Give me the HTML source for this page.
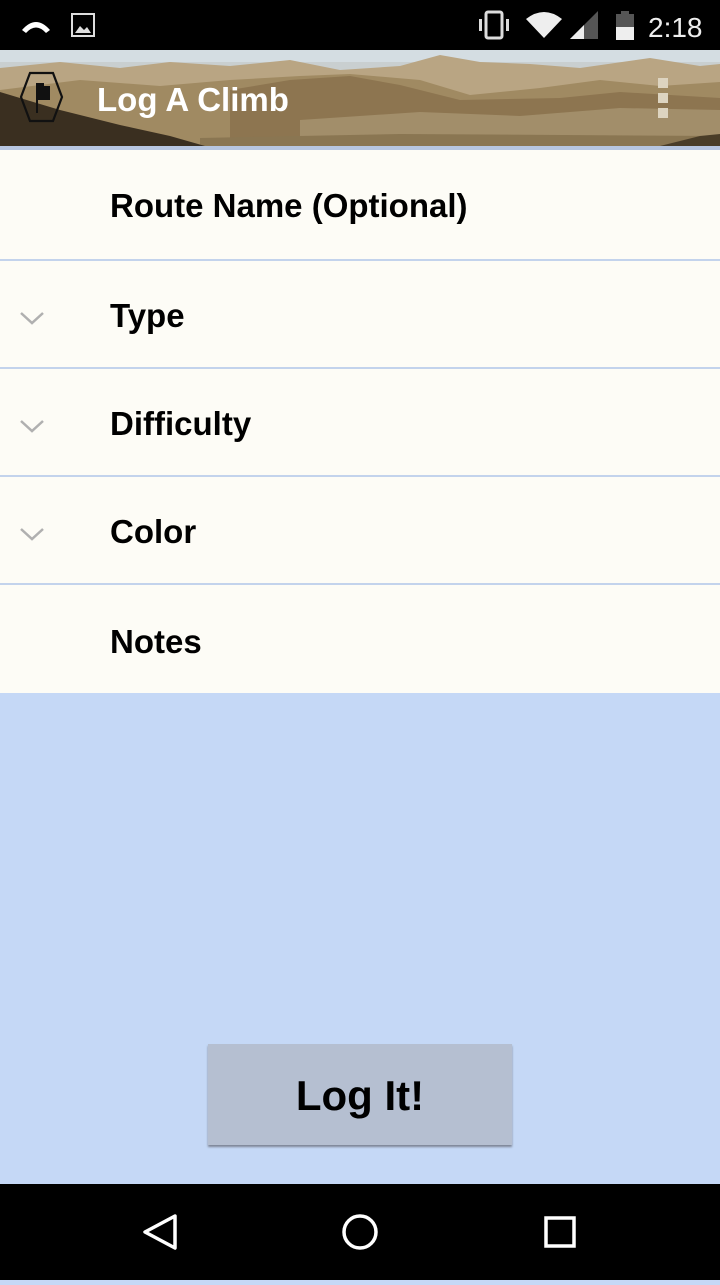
<!DOCTYPE html>
<html><head><style>
body{margin:0;width:720px;height:1280px;background:#c5d8f6;position:relative;overflow:hidden;font-family:"Liberation Sans",sans-serif}
.sb{position:absolute;top:0;left:0;width:720px;height:50px;background:#000}
.hdr{position:absolute;top:50px;left:0;width:720px;height:96px;background:#c9cfd0;overflow:hidden}
.line{position:absolute;top:146px;left:0;width:720px;height:4px;background:#b7c6e0}
.row{position:absolute;left:0;width:720px;background:#fdfcf6;border-bottom:2px solid #c3d3ec}
.row span{position:absolute;left:110px;font-weight:bold;font-size:33px;color:#000}
.chev{position:absolute;left:20px;width:24px;height:14px}
.btn{position:absolute;left:208px;top:1044px;width:304px;height:101px;background:#b5bfd1;box-shadow:0 2px 2px #7d8596;font-weight:bold;font-size:42px;text-align:center;line-height:104px}
.nav{position:absolute;top:1184px;left:0;width:720px;height:96px;background:#000}
</style></head><body>
<div class="sb">
<svg width="720" height="50">
<path d="M22 30 Q36 14 50 30 L46 33 Q36 22 26 33Z" fill="#fff"/>
<rect x="72" y="14" width="22" height="22" fill="none" stroke="#ddd" stroke-width="2"/>
<path d="M75 33 L80 26 L84 30 L87 27 L91 33Z" fill="#ddd"/>
<rect x="486" y="12" width="16" height="26" rx="2" fill="none" stroke="#ddd" stroke-width="3"/>
<rect x="479" y="19" width="3" height="12" fill="#ddd"/><rect x="506" y="19" width="3" height="12" fill="#ddd"/>
<path d="M526 19 Q544 5 562 19 L544 38Z" fill="#eee"/>
<path d="M570 39 L598 11 L598 39Z" fill="#555"/><path d="M570 39 L584 25 L584 39Z" fill="#eee"/>
<rect x="616" y="14" width="18" height="26" fill="#555"/><rect x="616" y="27" width="18" height="13" fill="#eee"/><rect x="621" y="11" width="8" height="4" fill="#555"/>
<text x="648" y="37" fill="#eee" font-size="28" font-family="Liberation Sans">2:18</text>
</svg></div>
<div class="hdr">
<svg width="720" height="96" style="position:absolute;top:0;left:0">
<rect width="720" height="12" fill="#d4dde2"/>
<path d="M0 18 L60 12 L120 18 L170 12 L230 16 L290 10 L340 20 L400 16 L440 5 L480 12 L530 14 L580 18 L650 8 L700 16 L720 14 L720 96 L0 96Z" fill="#b9a583"/>
<path d="M0 40 L80 30 L160 36 L230 30 L300 26 L350 24 L420 30 L470 45 L540 38 L600 30 L660 36 L720 32 L720 96 L0 96Z" fill="#a08a62"/>
<path d="M230 40 L290 30 L350 26 L400 35 L460 50 L560 48 L620 42 L720 48 L720 96 L230 96Z" fill="#8d7550"/>
<path d="M300 70 L420 62 L520 66 L620 58 L720 60 L720 96 L300 96Z" fill="#a28e6a"/>
<path d="M200 88 L400 84 L720 86 L720 96 L200 96Z" fill="#8a7652"/>
<path d="M0 42 L60 60 L120 75 L170 86 L205 96 L0 96Z" fill="#3a2f20"/>
<path d="M660 96 L700 86 L720 84 L720 96Z" fill="#4a3d28"/>
<polygon points="30,23 53,23 62,47 53,71 30,71 21,47" fill="none" stroke="#111" stroke-width="2.2"/>
<path d="M37 33 L37 63" stroke="#111" stroke-width="2"/>
<path d="M37 33 L44 33 L44 36 L50 36 L50 50 L37 50Z" fill="#111"/>
<text x="97" y="61" fill="#fff" font-size="33" font-weight="bold" font-family="Liberation Sans">Log A Climb</text>
<rect x="658" y="28" width="10" height="10" fill="#ddd4c0"/><rect x="658" y="43" width="10" height="10" fill="#ddd4c0"/><rect x="658" y="58" width="10" height="10" fill="#ddd4c0"/>
</svg></div>
<div class="line"></div>
<div class="row" style="top:150px;height:109px"><span style="top:37px">Route Name (Optional)</span></div>
<div class="row" style="top:261px;height:106px"><svg class="chev" style="top:50px"><path d="M1 2 L12 12 L23 2" fill="none" stroke="#b0b0b0" stroke-width="2.5"/></svg><span style="top:36px">Type</span></div>
<div class="row" style="top:369px;height:106px"><svg class="chev" style="top:50px"><path d="M1 2 L12 12 L23 2" fill="none" stroke="#b0b0b0" stroke-width="2.5"/></svg><span style="top:36px">Difficulty</span></div>
<div class="row" style="top:477px;height:106px"><svg class="chev" style="top:50px"><path d="M1 2 L12 12 L23 2" fill="none" stroke="#b0b0b0" stroke-width="2.5"/></svg><span style="top:36px">Color</span></div>
<div class="row" style="top:585px;height:108px;border-bottom:none"><span style="top:38px">Notes</span></div>
<div class="btn">Log It!</div>
<div class="nav"><svg width="720" height="96">
<path d="M175 32 L145 48 L175 64Z" fill="none" stroke="#fff" stroke-width="3.5" stroke-linejoin="round"/>
<circle cx="360" cy="48" r="16" fill="none" stroke="#fff" stroke-width="3.5"/>
<rect x="546" y="34" width="28" height="28" fill="none" stroke="#fff" stroke-width="3.5"/>
</svg></div>
</body></html>
